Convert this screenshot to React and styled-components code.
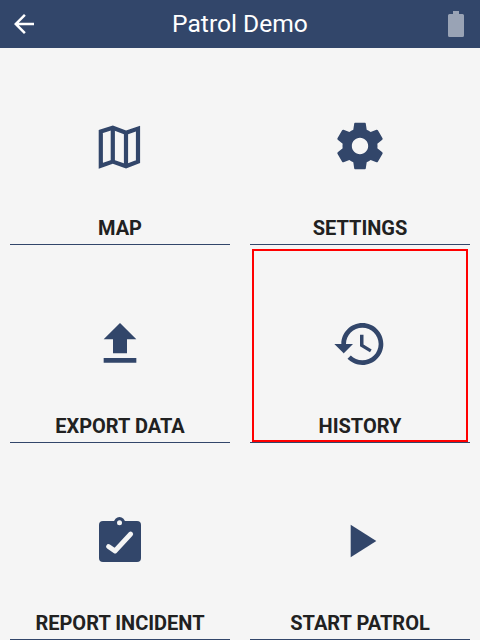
import React from 'react';
import styled, { createGlobalStyle } from 'styled-components';

const Global = createGlobalStyle`
  html, body { margin: 0; padding: 0; height: 100%; background: #f5f5f5; }
  #root { height: 100%; }
`;

const Screen = styled.div`
  width: 480px;
  height: 640px;
  display: flex;
  flex-direction: column;
  background: #f5f5f5;
  overflow: hidden;
  font-family: Roboto, "Liberation Sans", sans-serif;
`;

const Toolbar = styled.header`
  flex: 0 0 48px;
  display: grid;
  grid-template-columns: 1fr auto 1fr;
  align-items: center;
  padding: 0 16px 0 9px;
  background: #32466a;
  color: #fff;
`;

const Title = styled.h1`
  margin: 0 0 0 7px;
  font-size: 24.6px;
  font-weight: 400;
  line-height: 48px;
`;

const ToolIcon = styled.svg`
  display: block;
  width: ${p => p.$w}px;
  height: ${p => p.$h}px;
  fill: currentColor;
`;

const BatteryIcon = styled(ToolIcon)`
  justify-self: end;
  opacity: 0.5;
`;

const Grid = styled.main`
  flex: 1;
  display: grid;
  grid-template-columns: 1fr 1fr;
  grid-template-rows: repeat(3, 1fr);
`;

const Tile = styled.button`
  position: relative;
  display: flex;
  flex-direction: column;
  align-items: center;
  margin: 0 10px;
  padding: 70.3px 0 0;
  background: none;
  border: 0;
  border-bottom: 1px solid #32466a;
  font-family: inherit;
  color: #212121;

  ${p => p.$selected && `
    &::after {
      content: "";
      position: absolute;
      top: 4px;
      left: 2px;
      right: 2px;
      bottom: 0px;
      border: 2px solid #f00;
    }
  `}
`;

const TileIcon = styled.svg`
  display: block;
  width: 56px;
  height: 56px;
  flex: none;
  fill: #32466a;
`;

const Label = styled.span`
  margin-top: auto;
  margin-bottom: 4px;
  font-size: 20px;
  font-weight: 700;
  line-height: 24px;
  white-space: nowrap;
`;

const MapIcon = () => (
  <TileIcon viewBox="0 0 56 56">
    <g fill="none" stroke="#32466a" strokeWidth="4.2" strokeLinejoin="miter">
      <path d="M8.8 13.6 L20.8 9.8 L34 14.8 L46 10.6 V43.6 L34 48.2 L20.8 43.6 L8.8 47.8 Z" />
      <path d="M20.8 10 V43.5 M34 14.8 V48" />
    </g>
  </TileIcon>
);

const GearIcon = () => (
  <TileIcon viewBox="0 0 24 24">
    <path d="M19.43 12.98c.04-.32.07-.64.07-.98s-.03-.66-.07-.98l2.11-1.65c.19-.15.24-.42.12-.64l-2-3.46c-.12-.22-.39-.3-.61-.22l-2.49 1c-.52-.4-1.08-.73-1.69-.98l-.38-2.65C14.46 2.18 14.25 2 14 2h-4c-.25 0-.46.18-.49.42l-.38 2.65c-.61.25-1.17.59-1.69.98l-2.49-1c-.23-.09-.49 0-.61.22l-2 3.46c-.13.22-.07.49.12.64l2.11 1.65c-.04.32-.07.65-.07.98s.03.66.07.98l-2.11 1.65c-.19.15-.24.42-.12.64l2 3.46c.12.22.39.3.61.22l2.49-1c.52.4 1.08.73 1.69.98l.38 2.65c.03.24.24.42.49.42h4c.25 0 .46-.18.49-.42l.38-2.65c.61-.25 1.17-.59 1.69-.98l2.49 1c.23.09.49 0 .61-.22l2-3.46c.12-.22.07-.49-.12-.64l-2.11-1.65zM12 15.5c-1.93 0-3.5-1.57-3.5-3.5s1.57-3.5 3.5-3.5 3.5 1.57 3.5 3.5-1.57 3.5-3.5 3.5z" />
  </TileIcon>
);

const UploadIcon = () => (
  <TileIcon viewBox="0 0 24 24"><path d="M9 16h6v-6h4l-7-7-7 7h4zm-4 2h14v2H5z" /></TileIcon>
);

const HistoryIcon = () => (
  <TileIcon viewBox="0 0 24 24">
    <path d="M13 3c-4.97 0-9 4.03-9 9H1l3.89 3.89.07.14L9 12H6c0-3.87 3.13-7 7-7s7 3.13 7 7-3.13 7-7 7c-1.93 0-3.68-.79-4.94-2.06l-1.42 1.42C8.27 19.99 10.51 21 13 21c4.97 0 9-4.03 9-9s-4.03-9-9-9zm-1 5v5l4.28 2.54.72-1.21-3.5-2.08V8H12z" />
  </TileIcon>
);

const ClipboardIcon = () => (
  <TileIcon viewBox="0 0 56 56">
    <rect x="7" y="8" width="42" height="41" rx="4" />
    <circle cx="27.5" cy="9.7" r="5.6" />
    <circle cx="27.5" cy="9.7" r="2.5" fill="#f5f5f5" />
    <path d="M16.5 33.5 L23 38 L38.7 21" fill="none" stroke="#f5f5f5" strokeWidth="4.8" strokeLinecap="round" strokeLinejoin="round" />
  </TileIcon>
);

const PlayIcon = () => (
  <TileIcon viewBox="0 0 24 24"><path d="M8 5v14l11-7z" /></TileIcon>
);

const tiles = [
  { label: 'MAP', Icon: MapIcon },
  { label: 'SETTINGS', Icon: GearIcon },
  { label: 'EXPORT DATA', Icon: UploadIcon },
  { label: 'HISTORY', Icon: HistoryIcon, selected: true },
  { label: 'REPORT INCIDENT', Icon: ClipboardIcon },
  { label: 'START PATROL', Icon: PlayIcon },
];

export default function App() {
  return (
    <Screen>
      <Global />
      <Toolbar>
        <ToolIcon $w={30} $h={30} viewBox="0 0 24 24">
          <path d="M20 11H7.83l5.59-5.59L12 4l-8 8 8 8 1.41-1.41L7.83 13H20v-2z" />
        </ToolIcon>
        <Title>Patrol Demo</Title>
        <BatteryIcon $w={16} $h={26} viewBox="0 0 16 26">
          <path d="M5 0h6v3h3.5A1.5 1.5 0 0 1 16 4.5v20a1.5 1.5 0 0 1-1.5 1.5h-13A1.5 1.5 0 0 1 0 24.5v-20A1.5 1.5 0 0 1 1.5 3H5z" />
        </BatteryIcon>
      </Toolbar>
      <Grid>
        {tiles.map(({ label, Icon, selected }) => (
          <Tile key={label} $selected={selected}>
            <Icon />
            <Label>{label}</Label>
          </Tile>
        ))}
      </Grid>
    </Screen>
  );
}
